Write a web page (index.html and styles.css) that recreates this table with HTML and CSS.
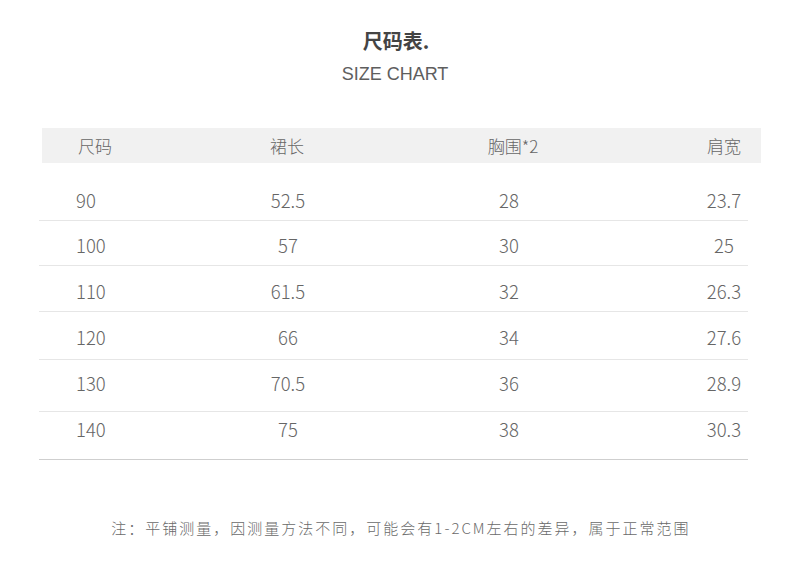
FILE: index.html
```html
<!DOCTYPE html>
<html lang="zh-CN">
<head>
<meta charset="utf-8">
<title>尺码表</title>
<link rel="stylesheet" href="styles.css">
</head>
<body>
<div class="page">
  <h1 class="title">尺码表.</h1>
  <div class="subtitle">SIZE CHART</div>
  <div class="table">
    <div class="head">
      <div class="c1">尺码</div>
      <div class="c">裙长</div>
      <div class="c">胸围*2</div>
      <div class="c">肩宽</div>
    </div>
    <div class="row"><div class="c1">90</div><div class="c">52.5</div><div class="c">28</div><div class="c">23.7</div></div>
    <div class="row"><div class="c1">100</div><div class="c">57</div><div class="c">30</div><div class="c">25</div></div>
    <div class="row"><div class="c1">110</div><div class="c">61.5</div><div class="c">32</div><div class="c">26.3</div></div>
    <div class="row"><div class="c1">120</div><div class="c">66</div><div class="c">34</div><div class="c">27.6</div></div>
    <div class="row"><div class="c1">130</div><div class="c">70.5</div><div class="c">36</div><div class="c">28.9</div></div>
    <div class="row last"><div class="c1">140</div><div class="c">75</div><div class="c">38</div><div class="c">30.3</div></div>
  </div>
  <p class="note">注：平铺测量，因测量方法不同，可能会有1-2CM左右的差异，属于正常范围</p>
</div>
</body>
</html>
```

FILE: styles.css
```css
html, body {
  margin: 0;
  padding: 0;
  background: #ffffff;
}

body {
  font-family: "Noto Sans CJK SC", "Noto Sans", sans-serif;
  color: #666666;
}

.page {
  width: 790px;
  padding-top: 29px;
}

.title {
  margin: 0;
  font-size: 20px;
  line-height: 24px;
  font-weight: 700;
  color: #444444;
  text-align: center;
  padding-left: 2px;
}

.subtitle {
  margin-top: 10px;
  font-family: "Liberation Sans", Arial, sans-serif;
  font-size: 18px;
  line-height: 22px;
  color: #5e5e5e;
  text-align: center;
}

.table {
  margin-top: 43px;
  margin-left: 39px;
  width: 722px;
}

.head {
  margin-left: 3px;
  width: 719px;
  height: 35px;
  box-sizing: border-box;
  padding-left: 36px;
  background: #f1f1f1;
  display: grid;
  grid-template-columns: 172px 74px 378px 44px;
  align-items: center;
  font-size: 17px;
  line-height: 20px;
  font-weight: 300;
  color: #666666;
}

.row {
  width: 709px;
  box-sizing: border-box;
  padding-left: 37px;
  display: grid;
  grid-template-columns: 182px 60px 382px 48px;
  font-size: 18.5px;
  line-height: 20px;
  font-weight: 300;
  color: #666666;
  border-bottom: 1px solid #e6e6e6;
}

.row:nth-child(2) { padding-top: 27px; padding-bottom: 10px; }
.row:nth-child(3) { padding-top: 14px; padding-bottom: 10px; }
.row:nth-child(4) { padding-top: 15px; padding-bottom: 10px; }
.row:nth-child(5) { padding-top: 15px; padding-bottom: 12px; }
.row:nth-child(6) { padding-top: 13px; padding-bottom: 18px; }
.row:nth-child(7) { padding-top: 7px; padding-bottom: 20px; }

.row.last {
  border-bottom-color: #cfcfcf;
}

.c1 {
  text-align: left;
  white-space: nowrap;
}

.c {
  text-align: center;
  white-space: nowrap;
}

.note {
  margin: 58px 0 0 0;
  padding-left: 12px;
  font-size: 15px;
  line-height: 20px;
  letter-spacing: 2px;
  font-weight: 300;
  color: #6a6a6a;
  text-align: center;
  white-space: nowrap;
}
```
